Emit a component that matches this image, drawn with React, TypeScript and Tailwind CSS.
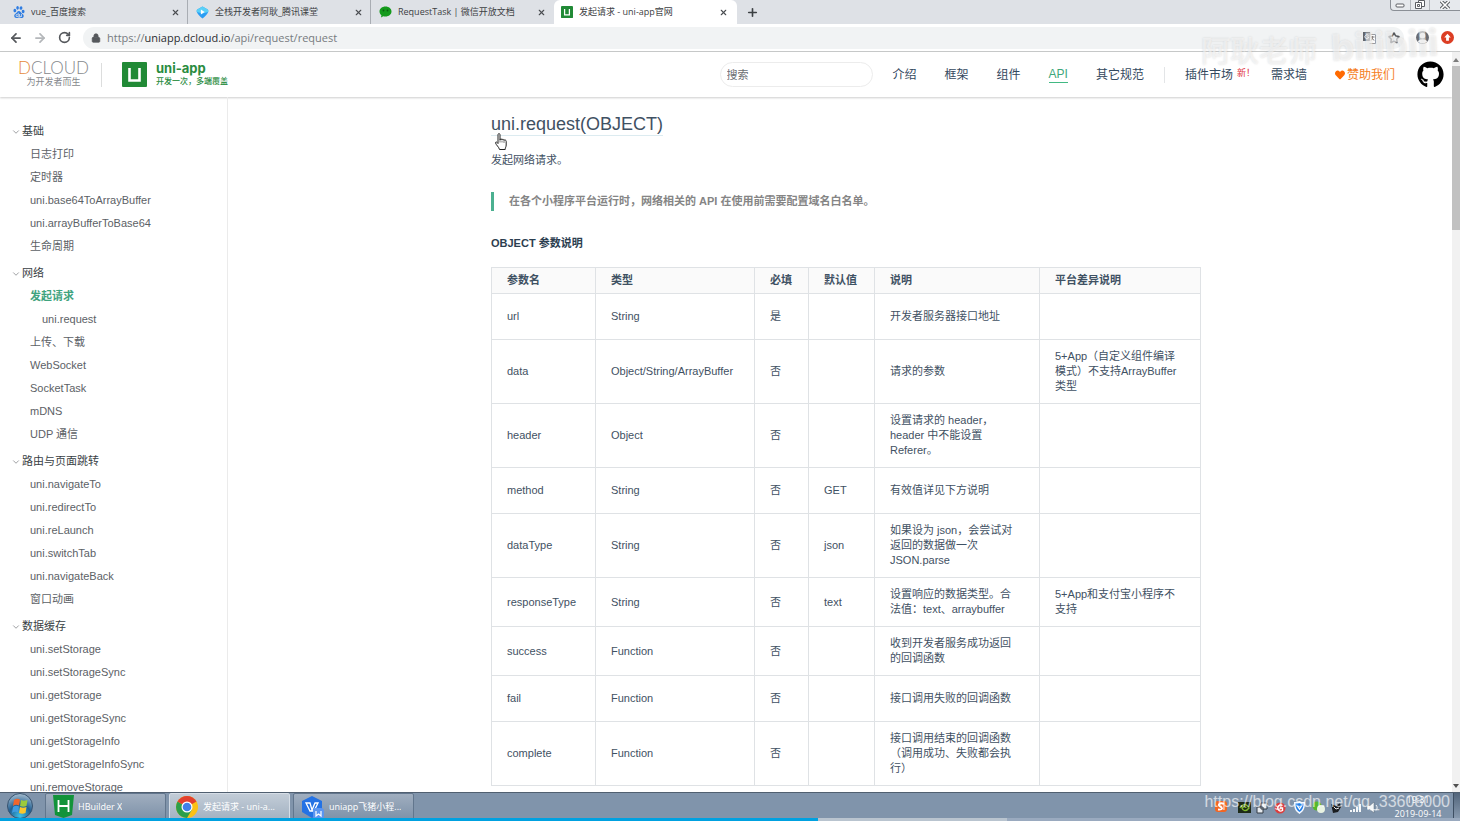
import { ReactNode } from 'react'
import { ArrowLeft, ArrowRight, ChevronDown, Lock, Plus, RotateCw, Star, X } from 'lucide-react'
import { FaGithub, FaHeart } from 'react-icons/fa'
import { SiBaidu } from 'react-icons/si'

interface Tab {
  title: string
  icon: ReactNode
  active?: boolean
}

interface SidebarItem {
  label: string
  active?: boolean
  nested?: boolean
}

interface SidebarGroup {
  title: string
  items: SidebarItem[]
}

interface Param {
  name: string
  type: string
  required: string
  fallback?: string
  desc: string
  platform?: string
}

const TABS: Tab[] = [
  { title: 'vue_百度搜索', icon: <SiBaidu className="size-3 text-[#2f7de1]" /> },
  { title: '全栈开发者阿耿_腾讯课堂', icon: <ClassroomIcon /> },
  { title: 'RequestTask | 微信开放文档', icon: <WechatIcon /> },
  { title: '发起请求 - uni-app官网', icon: <UniLogo className="size-3" />, active: true },
]

const SIDEBAR: SidebarGroup[] = [
  {
    title: '基础',
    items: [
      { label: '日志打印' },
      { label: '定时器' },
      { label: 'uni.base64ToArrayBuffer' },
      { label: 'uni.arrayBufferToBase64' },
      { label: '生命周期' },
    ],
  },
  {
    title: '网络',
    items: [
      { label: '发起请求', active: true },
      { label: 'uni.request', nested: true },
      { label: '上传、下载' },
      { label: 'WebSocket' },
      { label: 'SocketTask' },
      { label: 'mDNS' },
      { label: 'UDP 通信' },
    ],
  },
  {
    title: '路由与页面跳转',
    items: [
      { label: 'uni.navigateTo' },
      { label: 'uni.redirectTo' },
      { label: 'uni.reLaunch' },
      { label: 'uni.switchTab' },
      { label: 'uni.navigateBack' },
      { label: '窗口动画' },
    ],
  },
  {
    title: '数据缓存',
    items: [
      { label: 'uni.setStorage' },
      { label: 'uni.setStorageSync' },
      { label: 'uni.getStorage' },
      { label: 'uni.getStorageSync' },
      { label: 'uni.getStorageInfo' },
      { label: 'uni.getStorageInfoSync' },
      { label: 'uni.removeStorage' },
    ],
  },
]

const PARAMS: Param[] = [
  { name: 'url', type: 'String', required: '是', desc: '开发者服务器接口地址' },
  {
    name: 'data',
    type: 'Object/String/ArrayBuffer',
    required: '否',
    desc: '请求的参数',
    platform: '5+App（自定义组件编译\n模式）不支持ArrayBuffer\n类型',
  },
  {
    name: 'header',
    type: 'Object',
    required: '否',
    desc: '设置请求的 header，\nheader 中不能设置\nReferer。',
  },
  { name: 'method', type: 'String', required: '否', fallback: 'GET', desc: '有效值详见下方说明' },
  {
    name: 'dataType',
    type: 'String',
    required: '否',
    fallback: 'json',
    desc: '如果设为 json，会尝试对\n返回的数据做一次\nJSON.parse',
  },
  {
    name: 'responseType',
    type: 'String',
    required: '否',
    fallback: 'text',
    desc: '设置响应的数据类型。合\n法值：text、arraybuffer',
    platform: '5+App和支付宝小程序不\n支持',
  },
  { name: 'success', type: 'Function', required: '否', desc: '收到开发者服务成功返回\n的回调函数' },
  { name: 'fail', type: 'Function', required: '否', desc: '接口调用失败的回调函数' },
  {
    name: 'complete',
    type: 'Function',
    required: '否',
    desc: '接口调用结束的回调函数\n（调用成功、失败都会执\n行）',
  },
]

// Row height by the number of text lines in the tallest cell
const ROW_HEIGHT: Record<number, string> = {
  1: 'h-[46px]',
  2: 'h-[49px]',
  3: 'h-16',
}

function countLines(param: Param) {
  return Math.max(param.desc.split('\n').length, (param.platform ?? '').split('\n').length)
}

function UniLogo({ className }: { className?: string }) {
  return (
    <svg viewBox="0 0 25 25" className={className} aria-hidden="true">
      <rect width="25" height="25" rx="1" fill="#218a36" />
      <path d="M7.500 6v12.500h10V6" fill="none" stroke="#fff" strokeWidth="2.600" />
    </svg>
  )
}

function ClassroomIcon() {
  return (
    <svg viewBox="0 0 24 24" className="size-[13px]" aria-hidden="true">
      <path d="m12 1 9 5c2 1 2 3 1.500 5-1 3-6 9-10.500 12C7.500 20 2.500 14 1.500 11 1 9 1 7 3 6z" fill="#2b9df4" />
      <path d="m12 1 9 5c2 1 2 3 1.500 5L12 14 1.500 11C1 9 1 7 3 6z" fill="#5ad0f7" />
      <path d="M9 6.500v9l7-4.500z" fill="#fff" />
    </svg>
  )
}

function WechatIcon() {
  return (
    <svg viewBox="0 0 13 12" className="h-3 w-[13px]" aria-hidden="true">
      <path d="M6.500.5c3.500 0 6 2.200 6 5s-2.500 5-6 5c-.8 0-1.500-.1-2.200-.3L2 11.500l.4-2.200C1.200 8.400.5 7 .5 5.500c0-2.800 2.500-5 6-5z" fill="#149a1c" />
      <circle cx="4.500" cy="4.500" r="0.900" fill="#0b5e11" />
      <circle cx="8.500" cy="4.500" r="0.900" fill="#0b5e11" />
    </svg>
  )
}

function TabStrip() {
  return (
    <div className="relative flex h-6 shrink-0 items-stretch bg-[#dee1e6] pl-[5px]">
      {TABS.map((tab) => (
        <div
          key={tab.title}
          className={
            tab.active
              ? 'flex w-[183px] items-center gap-[6px] rounded-t-md bg-white pr-2 pl-[7px]'
              : 'flex w-[183px] items-center gap-[6px] border-r border-[#a9adb3] pr-[6px] pl-2 nth-3:border-transparent'
          }
        >
          {tab.icon}
          <button type="button" className="flex-1 truncate text-left text-[9px] leading-4 text-[#3c4043]">
            {tab.title}
          </button>
          <button type="button" aria-label="关闭标签页" className="p-px text-[#4a4d51]">
            <X className="size-[9px]" strokeWidth={3} />
          </button>
        </div>
      ))}
      <button type="button" aria-label="新标签页" className="ml-[9px] text-[#3c4043]">
        <Plus className="size-[13px]" strokeWidth={3} />
      </button>
      <div className="ml-auto flex h-[11px] w-[70px] rounded-bl border-b border-l border-[#8b8f96] bg-[#e6e9ed] text-[#5a5d62]">
        <button type="button" aria-label="最小化" className="flex flex-1 items-center justify-center border-r border-[#b3b7bd]">
          <svg viewBox="0 0 10 6" className="h-[6px] w-[10px]">
            <rect x="1" y="2" width="8" height="3" rx="1" fill="#fff" stroke="currentColor" />
          </svg>
        </button>
        <button type="button" aria-label="还原" className="flex flex-1 items-center justify-center border-r border-[#b3b7bd]">
          <svg viewBox="0 0 10 10" className="size-[10px]">
            <path d="M3.500.5h6v6h-6z" fill="#fff" stroke="currentColor" />
            <path d="M.5 2.500h6v6h-6zM2.500 4.500h2v2h-2z" fill="#fff" stroke="currentColor" />
          </svg>
        </button>
        <button type="button" aria-label="关闭" className="flex w-[30px] items-center justify-center">
          <svg viewBox="0 0 10 8" className="h-2 w-[10px]">
            <path d="m1 0 8 8M9 0 1 8" stroke="currentColor" strokeWidth="3.500" />
            <path d="m1 0 8 8M9 0 1 8" stroke="#fff" strokeWidth="1.500" />
          </svg>
        </button>
      </div>
    </div>
  )
}

function AddressBar() {
  return (
    <div className="flex h-7 shrink-0 items-center border-b border-[#c9cbcb] bg-white pr-1 pl-[9px] text-[#55585c]">
      <button type="button" aria-label="后退">
        <ArrowLeft className="size-[14px]" strokeWidth={3} />
      </button>
      <button type="button" aria-label="前进" className="ml-[10px] text-[#b4b7ba]">
        <ArrowRight className="size-[14px]" strokeWidth={3} />
      </button>
      <button type="button" aria-label="重新加载" className="ml-[11px]">
        <RotateCw className="size-[13px]" strokeWidth={3} />
      </button>
      <div className="ml-3 flex h-[22px] flex-1 items-center rounded-full bg-[#f1f3f4] pr-1 pl-2">
        <Lock className="size-[10px] fill-current" strokeWidth={2} />
        <a href="#top" className="ml-[6px] text-[11px] leading-4 text-[#777b80]">
          https://<span className="text-[#2b2e31]">uniapp.dcloud.io</span>/api/request/request
        </a>
        <button type="button" aria-label="翻译" className="ml-auto">
          <svg viewBox="0 0 13 12" className="h-3 w-[13px]">
            <path d="M0 0h7l2 9H0z" fill="#63666b" />
            <path d="M7.500 2.500h5v9h-6" fill="#fff" stroke="#9b9ea3" />
            <path d="M5.500 3.500A2 2 0 1 0 5.500 6V5H4" fill="none" stroke="#fff" />
            <path d="M8 5h3.500M9.500 4v1c0 2-1 3-1.500 3.500M9 6l2 2.500" fill="none" stroke="#75787d" />
          </svg>
        </button>
        <button type="button" aria-label="收藏" className="ml-3">
          <Star className="size-3" strokeWidth={3} />
        </button>
      </div>
      <button type="button" aria-label="用户" className="ml-3">
        <svg viewBox="0 0 14 14" className="size-[13px]">
          <circle cx="7" cy="7" r="7" fill="#686c72" />
          <circle cx="7" cy="5" r="3" fill="#fff" />
          <path d="M2 11c2-3 8-3 10 0-2 3-8 3-10 0z" fill="#fff" />
        </svg>
      </button>
      <button type="button" aria-label="更新" className="mr-[2px] ml-3">
        <svg viewBox="0 0 14 14" className="size-[13px]">
          <circle cx="7" cy="7" r="7" fill="#dc3e24" />
          <path d="M7 3 3.500 7H5.500v3.500h3V7h2z" fill="#fff" />
        </svg>
      </button>
    </div>
  )
}

function SiteHeader() {
  return (
    <header className="flex h-[45px] shrink-0 items-center bg-white pr-2 pl-[18px] text-xs text-[#34495e] shadow-[0_1px_2px_rgba(0,0,0,0.2)]">
      <a href="#dcloud" className="flex w-[71px] flex-col items-center text-[#85888c]">
        <span className="font-[Lato] text-[17px] leading-[14px] font-light whitespace-nowrap">
          <span className="text-[#e58a3c]">D</span>CLOUD
        </span>
        <span className="text-[9px] leading-[14px]">为开发者而生</span>
      </a>
      <span className="ml-3 h-6 w-px bg-[#dcdddd]" />
      <a href="#home" className="ml-5 flex items-center gap-[9px] font-bold text-[#2a8c3f]">
        <UniLogo className="size-[25px]" />
        <span className="flex flex-col">
          <span className="font-[Inter] text-[13px] leading-[14px]">uni-app</span>
          <span className="text-[8px] leading-[14px] font-medium">开发一次，多端覆盖</span>
        </span>
      </a>
      <input
        type="search"
        aria-label="搜索"
        placeholder="搜索"
        className="mr-5 ml-auto h-[25px] w-[153px] rounded-full border border-[#ececec] px-[6px] text-[11px] placeholder:text-[#6b6e72]"
      />
      <nav className="flex items-center whitespace-nowrap">
        <div className="flex items-center gap-7">
          <a href="#intro">介绍</a>
          <a href="#frame">框架</a>
          <a href="#component">组件</a>
          <a href="#api" className="border-b border-[#42b983] leading-4 text-[#3da77b]">API</a>
          <a href="#spec">其它规范</a>
        </div>
        <span className="mx-5 h-4 w-px bg-[#e3e5e7]" />
        <a href="#market" className="flex">
          插件市场
          <span className="ml-1 text-[9px] leading-3 text-[#e0303a]">新！</span>
        </a>
        <a href="#wish" className="ml-4">需求墙</a>
        <a href="#sponsor" className="ml-7 flex items-center gap-[2px] text-[#f57d1c]">
          <FaHeart className="size-[10px] text-[#ff6a00]" />
          赞助我们
        </a>
        <a href="#github" aria-label="GitHub" className="ml-[22px] text-black">
          <FaGithub className="size-[27px]" />
        </a>
      </nav>
    </header>
  )
}

function Sidebar() {
  return (
    <aside className="w-[228px] shrink-0 overflow-hidden border-r border-[#ebebeb] pt-[19px] pl-[11px] text-[11px] leading-[23px]">
      {SIDEBAR.map((group) => (
        <section key={group.title} className="mt-1">
          <h2 className="flex items-center gap-px text-[#3a3f45]">
            <ChevronDown className="size-[10px] text-[#8b8e92]" strokeWidth={2} />
            {group.title}
          </h2>
          <ul className="pl-[19px]">
            {group.items.map((item) => (
              <li key={item.label} className={item.nested ? 'pl-3' : ''}>
                <a
                  href={`#${item.label}`}
                  className={item.active ? 'font-bold text-[#3fa37e]' : 'text-[#5c6166]'}
                >
                  {item.label}
                </a>
              </li>
            ))}
          </ul>
        </section>
      ))}
    </aside>
  )
}

function HandCursor() {
  return (
    <svg viewBox="0 0 12 17" className="absolute top-5 left-1 h-[17px] w-3" aria-hidden="true">
      <path
        d="M3 10.500V2c0-2 2-2 2 0v5c0-1.500 2-1.500 2 0 0-1 2-1 2 .5 0-1 2.200-.8 2.200.8V12c0 2-1 2.500-1 4.500H4.500C4 14 1 12 .6 10c-.2-1.300 1-1.500 2.400.5z"
        fill="#fff"
        stroke="#222"
        strokeWidth="1"
      />
      <path d="M5 7v2.500M7 7.500v2M9 8v2" stroke="#444" strokeWidth="0.700" />
    </svg>
  )
}

function ParamTable() {
  return (
    <table className="mt-[14px] w-full table-fixed border-collapse text-left leading-[15px]">
      <colgroup>
        <col className="w-[104px]" />
        <col className="w-[159px]" />
        <col className="w-[54px]" />
        <col className="w-[66px]" />
        <col className="w-[165px]" />
        <col />
      </colgroup>
      <thead>
        <tr className="h-[26px] bg-[#fafafa]">
          {['参数名', '类型', '必填', '默认值', '说明', '平台差异说明'].map((label) => (
            <th key={label} className="border border-[#dfe2e5] pl-[15px] font-bold whitespace-nowrap">
              {label}
            </th>
          ))}
        </tr>
      </thead>
      <tbody>
        {PARAMS.map((param) => (
          <tr key={param.name} className={ROW_HEIGHT[countLines(param)]}>
            {[param.name, param.type, param.required, param.fallback, param.desc, param.platform].map(
              (text, i) => (
                <td key={i} className="border border-[#dfe2e5] pl-[15px] whitespace-pre">
                  {text}
                </td>
              ),
            )}
          </tr>
        ))}
      </tbody>
    </table>
  )
}

function Article() {
  return (
    <main className="min-w-0 flex-1 overflow-hidden pt-4 pl-3 text-[11px] text-[#3f5163]">
      <article className="mx-auto max-w-[710px]">
        <h1 className="relative text-lg leading-[22px]">
          <a href="#uni-request" className="inline-block border-b border-[#dcebf0]">
            uni.request(OBJECT)
          </a>
          <HandCursor />
        </h1>
        <p className="mt-[14px] leading-5">发起网络请求。</p>
        <blockquote className="mt-[22px] border-l-3 border-[#4bb090] pl-[15px] leading-[19px] font-bold text-[#858585]">
          在各个小程序平台运行时，网络相关的 API 在使用前需要配置域名白名单。
        </blockquote>
        <h2 className="mt-[22px] leading-5 font-bold text-[#2c3e50]">OBJECT 参数说明</h2>
        <ParamTable />
      </article>
    </main>
  )
}

function Scrollbar() {
  return (
    <div className="flex w-2 shrink-0 flex-col items-center bg-[#f1f1f1] py-1" aria-hidden="true">
      <svg viewBox="0 0 6 4" className="mt-[2px] h-1 w-[6px]">
        <path d="M0 4 3 0l3 4z" fill="#7c7c7c" />
      </svg>
      <span className="mt-1 h-[164px] w-full bg-[#c1c1c1]" />
      <svg viewBox="0 0 6 4" className="mt-auto h-1 w-[6px]">
        <path d="m0 0 3 4 3-4z" fill="#505050" />
      </svg>
    </div>
  )
}

function StartOrb() {
  return (
    <svg viewBox="0 0 26 26" className="size-[26px]" aria-hidden="true">
      <defs>
        <radialGradient id="orb" cx="0.5" cy="0.9" r="0.9">
          <stop offset="0" stopColor="#3fc1e8" />
          <stop offset="0.5" stopColor="#1f5f93" />
          <stop offset="1" stopColor="#a9bfd0" />
        </radialGradient>
      </defs>
      <circle cx="13" cy="13" r="12.500" fill="url(#orb)" stroke="#35526f" />
      <path d="M7 7c2-1.500 4-1.500 6-.5l-1 6c-2-1-4-1-6 .5z" fill="#f0662c" />
      <path d="M14 7c2 1 4 1 6.500 0l-1 6c-2 1-4 1-6.500 0z" fill="#9ccb3b" />
      <path d="M6 14c2-1.500 4-1.500 6-.5l-1 6c-2-1-4-1-6 .5z" fill="#3f9be0" />
      <path d="M13 14c2 1 4 1 6.500 0l-1 6c-2 1-4 1-6.500 0z" fill="#fbc62d" />
    </svg>
  )
}

function HBuilderIcon() {
  return (
    <svg viewBox="0 0 21 23" className="h-[23px] w-[21px]" aria-hidden="true">
      <path d="M0 0h21l-2 20-8.500 3L2 20z" fill="#12933a" />
      <path d="M5.500 5v12M15.500 5v12M5.500 11h10" stroke="#fff" strokeWidth="1.800" fill="none" />
    </svg>
  )
}

function ChromeIcon() {
  return (
    <svg viewBox="0 0 24 24" className="size-6" aria-hidden="true">
      <circle cx="12" cy="12" r="11" fill="#fbc116" />
      <path d="M12 12 2.500 6.500A11 11 0 0 0 12 23l5-8.500z" fill="#2c9f4b" />
      <path d="M12 12 2.500 6.500a11 11 0 0 1 19 0z" fill="#e2402f" />
      <circle cx="12" cy="12" r="5.500" fill="#fff" />
      <circle cx="12" cy="12" r="4.300" fill="#3f80ea" />
    </svg>
  )
}

function WpsIcon() {
  return (
    <svg viewBox="0 0 24 24" className="size-6" aria-hidden="true">
      <path d="m11 1 10 5v11l-10 6-10-6V6z" fill="#2472e4" />
      <path d="M5 8h4l2 7 3-7h3l-4 8H9z" fill="none" stroke="#fff" strokeWidth="1.300" />
      <rect x="12" y="13" width="11" height="11" rx="3" fill="#5b95f0" />
      <path d="M15 16v5l2.500-2 2.500 2v-5" fill="none" stroke="#fff" strokeWidth="1.200" />
    </svg>
  )
}

function TrayIcons() {
  return (
    <svg viewBox="0 0 164 14" className="h-[14px] w-[164px]" aria-hidden="true">
      <rect x="0" y="1" width="12" height="11" rx="3" fill="#f26522" />
      <path d="M9 4C5 2 2 5 5 6.500S8 10 3 9.500" fill="none" stroke="#fff" strokeWidth="1.800" />
      <rect x="23" y="2" width="13" height="11" fill="#1d2a18" />
      <path d="M25 8c3-5 7-4 9 0-3 4-6 3-7 0 2-2 4-1 4 0" fill="none" stroke="#7db72f" strokeWidth="1.400" />
      <path d="M46 3h6v6h-6zM42 7h6v6h-6z" fill="#e6eaee" stroke="#333b44" />
      <circle cx="65" cy="8" r="5.500" fill="#dc3d3d" />
      <path d="M67.500 5.500a3 3 0 1 0 0 5V8H65" fill="none" stroke="#fff" strokeWidth="1.400" />
      <path d="M79 2c3 0 4 0 5.500-1 1.500 1 2.500 1 5.500 1 0 6-1 9-5.500 12C80 11 79 8 79 2z" fill="#f4f8ff" />
      <path d="M80.500 3.500c2 0 3 0 4-.5 1 .5 2 .5 4 .5 0 4-1 6.500-4 8.500-3-2-4-4.500-4-8.500z" fill="#2380ea" />
      <path d="m82.500 6 2 3 2-3" fill="none" stroke="#fff" strokeWidth="1.300" />
      <circle cx="102" cy="6" r="4.500" fill="#57b82c" />
      <circle cx="106" cy="9" r="4" fill="#e9f3e2" />
      <path d="m116 4 5 2 4-3 1 4-3 5-5 1z" fill="#1b1d20" />
      <path d="m119 7 2 2 3-1" stroke="#e9ecef" fill="none" />
      <path d="M136 12v-2M139 12V9M142 12V7M145 12V4" stroke="#f5f7f9" strokeWidth="2" />
      <path d="M152 5.500h3l4-3.500v11l-4-3.500h-3z" fill="#f5f7f9" stroke="#58687a" strokeWidth="0.500" />
      <path d="M161 5c1.500 1.500 1.500 4 0 5.500" fill="none" stroke="#f5f7f9" />
    </svg>
  )
}

const TASKS = [
  { label: 'HBuilder X', icon: <HBuilderIcon /> },
  { label: '发起请求 - uni-a...', icon: <ChromeIcon />, active: true },
  { label: 'uniapp飞猪小程...', icon: <WpsIcon /> },
]

function Taskbar() {
  return (
    <footer className="relative flex h-[29px] shrink-0 items-start border-t border-[#505f70] bg-[#8094ab] text-[9px] text-white">
      <button type="button" aria-label="开始" className="ml-[7px]">
        <StartOrb />
      </button>
      <div className="ml-3 flex gap-[3px]">
        {TASKS.map((task) => (
          <button
            key={task.label}
            type="button"
            className={
              task.active
                ? 'flex h-[27px] w-[121px] items-center gap-1 rounded-xs border border-[#d5dde6] bg-linear-to-b from-[#c2ccd7] to-[#a3b2c2] pl-[5px]'
                : 'flex h-[27px] w-[121px] items-center gap-1 rounded-xs border border-[#62768d] bg-linear-to-b from-[#a0aebf] to-[#7e92a9] pl-[7px]'
            }
          >
            {task.icon}
            <span className="truncate">{task.label}</span>
          </button>
        ))}
      </div>
      <div className="ml-auto flex h-full items-start">
        <div className="mt-[7px] mr-[14px]">
          <TrayIcons />
        </div>
        <time className="mr-[10px] w-[50px] text-center leading-[14px]">
          19:31
          <br />
          2019-09-14
        </time>
        <button type="button" aria-label="显示桌面" className="h-full w-[7px] border-l border-[#3e4f63] bg-linear-to-b from-[#52657b] to-[#8ea0b5]" />
      </div>
      <span className="absolute top-0 right-[10px] text-base leading-[18px] text-white/65 [font-family:Liberation_Sans]">
        https://blog.csdn.net/qq_33608000
      </span>
      {/* Playback progress */}
      <div className="absolute inset-x-0 bottom-0 flex h-[3px] bg-[#9aaabf]" aria-hidden="true">
        <span className="w-[56%] bg-[#00a1e0]" />
        <span className="w-[13%] bg-[#b9c4cf]" />
      </div>
    </footer>
  )
}

function Watermark() {
  return (
    <div
      className="pointer-events-none absolute top-[23px] right-[22px] flex items-end gap-[14px] text-white/55 [text-shadow:0_0_2px_rgba(130,130,130,0.3)]"
      aria-hidden="true"
    >
      <span className="text-[29px] leading-8 font-medium">阿耿老师</span>
      <span className="-rotate-3 font-[Inter] text-4xl leading-[44px] font-extrabold">bilibili</span>
    </div>
  )
}

export default function App() {
  return (
    <div className="relative flex h-screen flex-col overflow-hidden bg-white [font-family:'Open_Sans','Noto_Sans_CJK_SC',sans-serif]">
      <TabStrip />
      <AddressBar />
      <div className="flex min-h-0 flex-1">
        <div className="flex min-w-0 flex-1 flex-col [font-family:'Liberation_Sans','Noto_Sans_CJK_SC',sans-serif]">
          <SiteHeader />
          <div className="flex min-h-0 flex-1">
            <Sidebar />
            <Article />
          </div>
        </div>
        <Scrollbar />
      </div>
      <Taskbar />
      <Watermark />
    </div>
  )
}
